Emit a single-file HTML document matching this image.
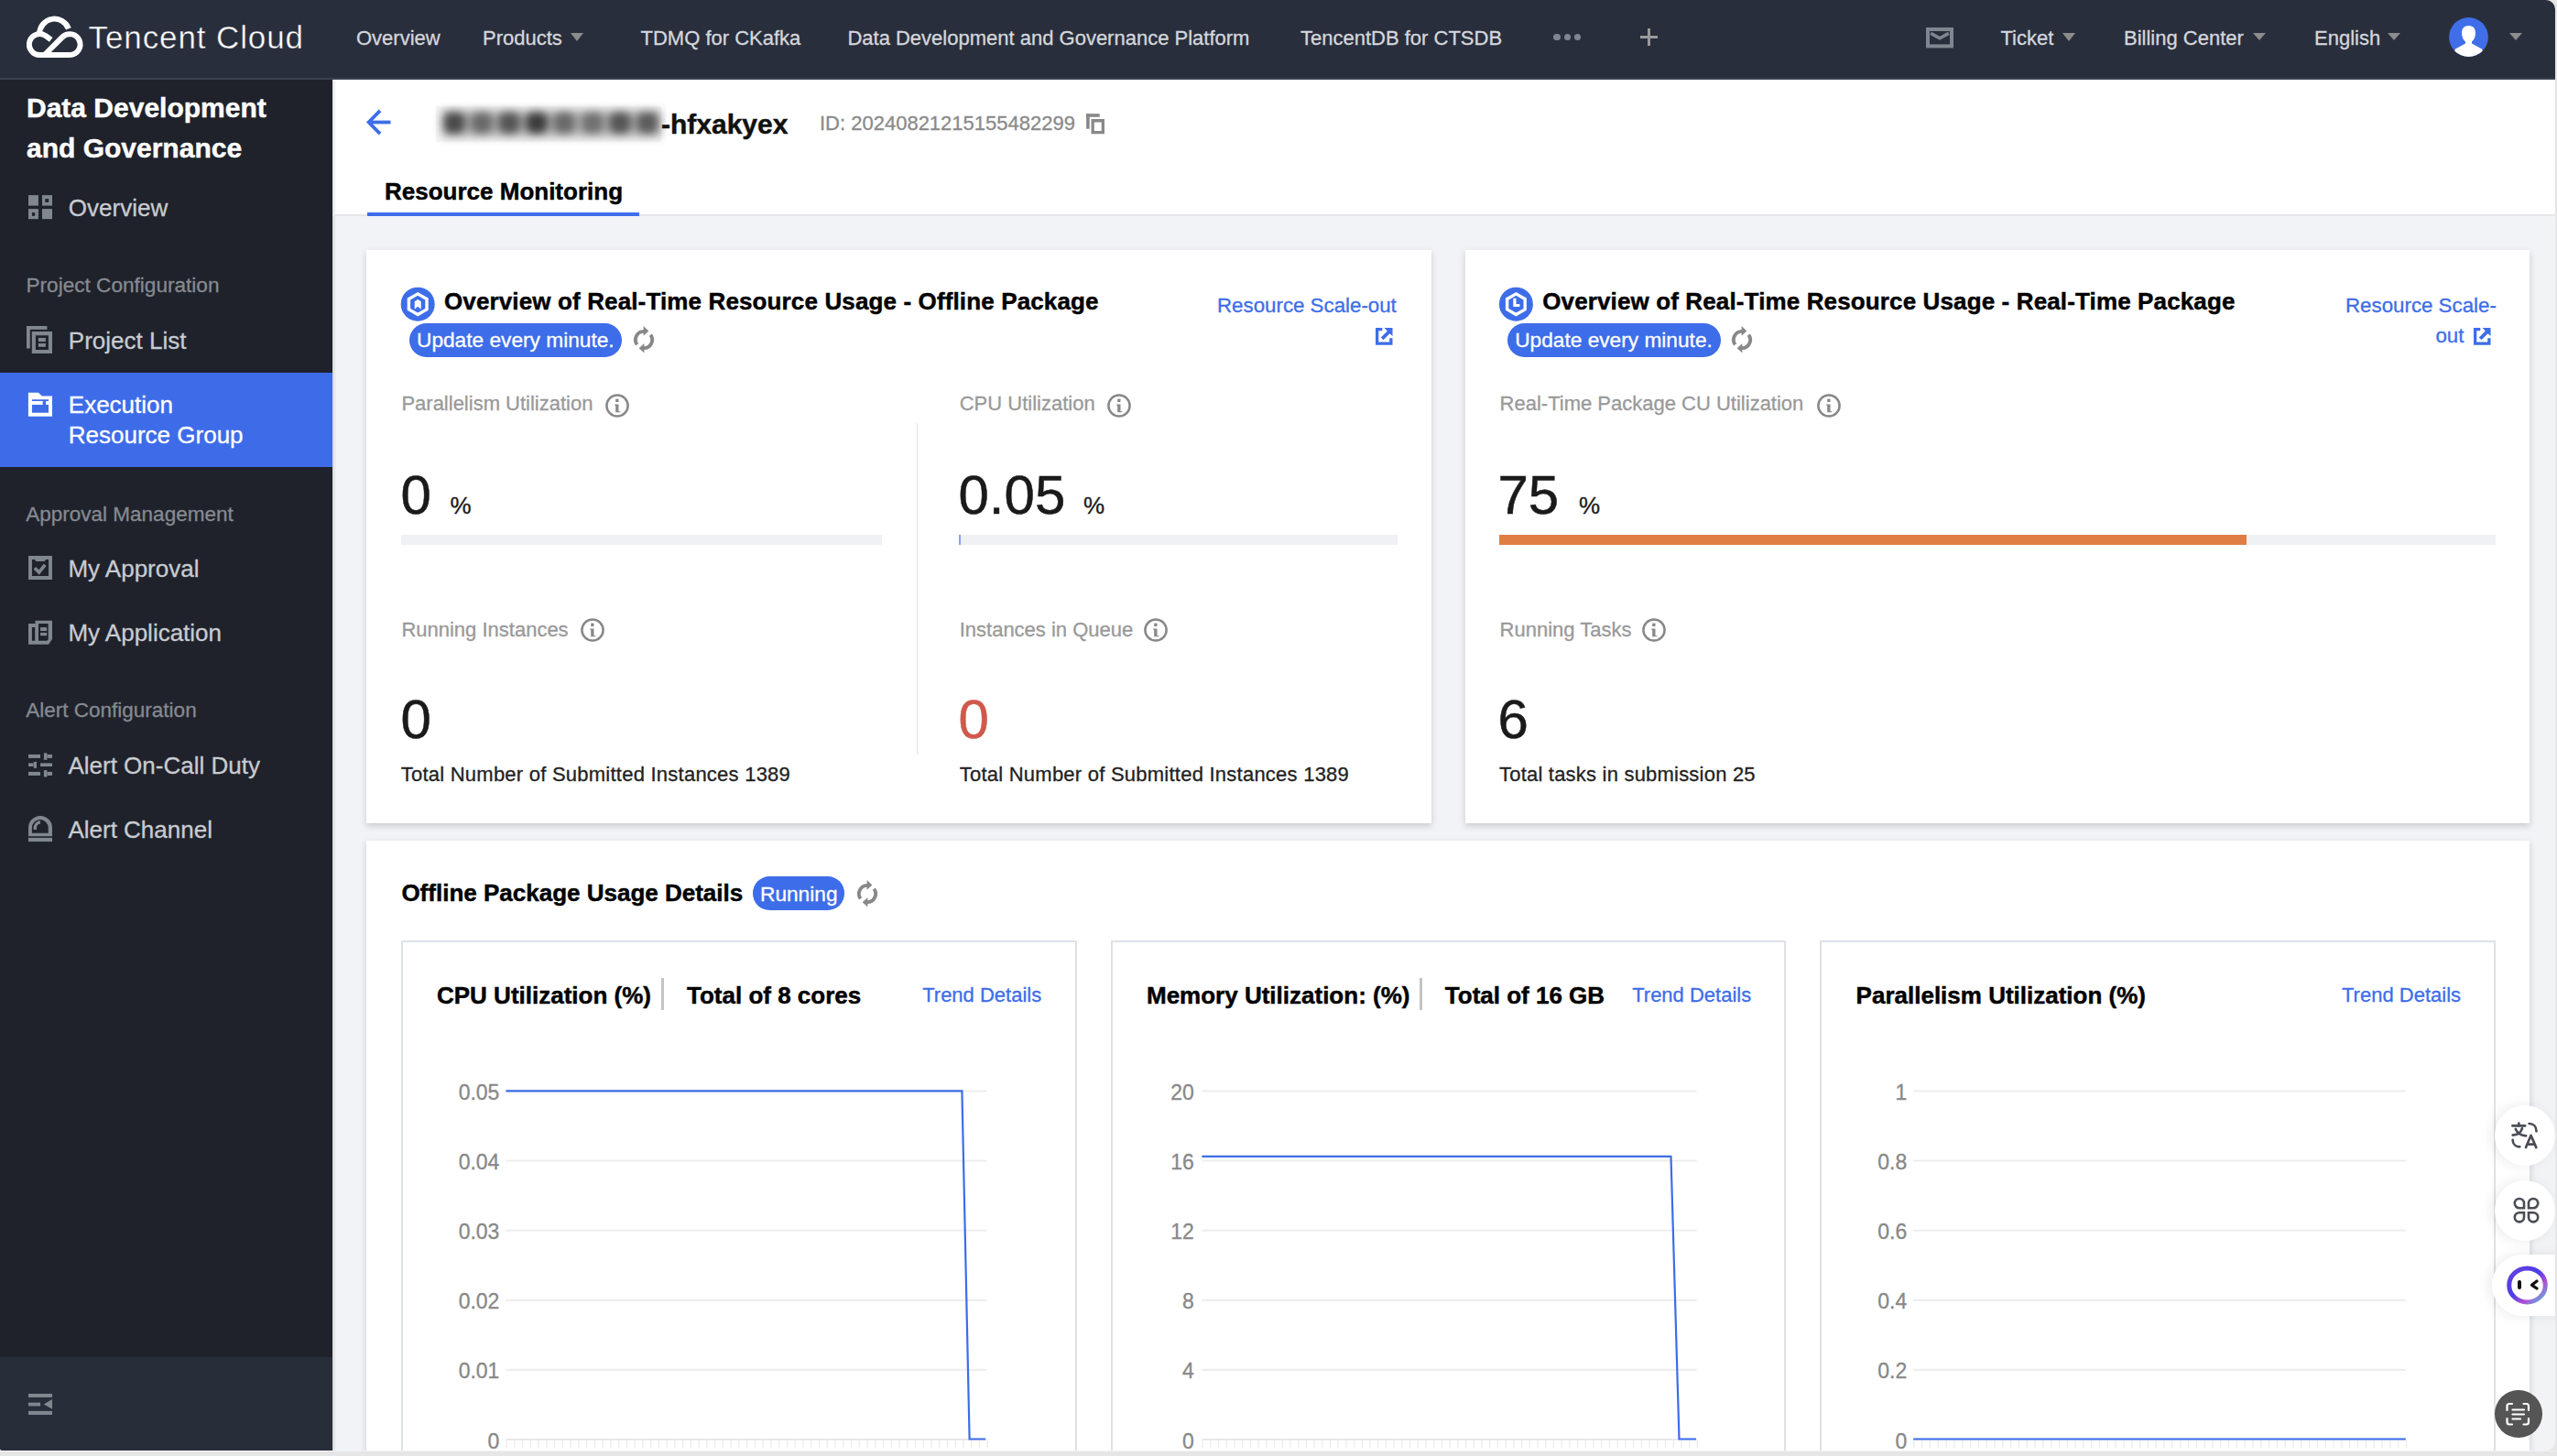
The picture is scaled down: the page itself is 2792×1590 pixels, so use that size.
<!DOCTYPE html>
<html><head><meta charset="utf-8">
<style>
html,body{margin:0;padding:0;}
body{width:2792px;height:1590px;overflow:hidden;position:relative;background:#e6e6e6;font-family:"Liberation Sans",sans-serif;}
#win{position:absolute;left:0;top:0;width:2790px;height:1584px;overflow:hidden;background:#f2f3f6;border-radius:0 10px 10px 3px;}
.t{position:absolute;white-space:nowrap;line-height:1;-webkit-text-stroke:0.3px currentColor;}
.r{position:absolute;}
svg{position:absolute;overflow:visible;}
</style></head><body>
<div id="win">
<div class="r" style="left:0.0px;top:0.0px;width:2790.0px;height:85.0px;background:#292e3c;"></div>
<div class="r" style="left:0.0px;top:85.0px;width:2790.0px;height:2.0px;background:#3a4152;"></div>
<svg style="left:20px;top:10px" width="80" height="60" viewBox="0 0 80 60"><g fill="none" stroke="#fff" stroke-width="6" stroke-linejoin="round">
<path d="M54.9 21.4 A16.4 16.4 0 0 0 23.1 27"/>
<path d="M35.7 33.4 L30.3 29.3 A11.5 11.5 0 1 0 23.4 50 L56.2 50 A11.4 11.4 0 1 0 48.1 30.5 L28.6 50"/>
</g></svg>
<div class="t" style="left:96.5px;top:23.4px;font-size:35px;color:#fff;letter-spacing:0.9px;-webkit-text-stroke:0.45px #292e3c;">Tencent Cloud</div>
<div class="t" style="left:389.0px;top:30.7px;font-size:22px;color:#d4d7dc;">Overview</div>
<div class="t" style="left:527.0px;top:30.7px;font-size:22px;color:#d4d7dc;">Products</div>
<div class="r" style="left:623.0px;top:35.9px;width:0;height:0;border-left:7.5px solid transparent;border-right:7.5px solid transparent;border-top:9.3px solid #8c8c8c;"></div>
<div class="t" style="left:699.5px;top:30.7px;font-size:22px;color:#d4d7dc;">TDMQ for CKafka</div>
<div class="t" style="left:925.4px;top:30.7px;font-size:22px;color:#d4d7dc;">Data Development and Governance Platform</div>
<div class="t" style="left:1420.0px;top:30.7px;font-size:22px;color:#d4d7dc;">TencentDB for CTSDB</div>
<div class="r" style="left:1696.4px;top:36.8px;width:7.6px;height:7.6px;border-radius:50%;background:#7f8690"></div>
<div class="r" style="left:1707.6px;top:36.8px;width:7.6px;height:7.6px;border-radius:50%;background:#7f8690"></div>
<div class="r" style="left:1718.7px;top:36.8px;width:7.6px;height:7.6px;border-radius:50%;background:#7f8690"></div>
<div class="r" style="left:1790.9px;top:39.0px;width:19.1px;height:3.3px;background:#9a9a9a;"></div>
<div class="r" style="left:1798.8px;top:31.2px;width:3.3px;height:18.8px;background:#9a9a9a;"></div>
<svg style="left:2103px;top:29.5px" width="30" height="23" viewBox="0 0 30 23"><rect x="2" y="2" width="26" height="18.4" fill="none" stroke="#7f8690" stroke-width="4"/><path d="M5.2 6.4 L15 11.7 L24.8 6.4" fill="none" stroke="#7f8690" stroke-width="3.5"/></svg>
<div class="t" style="left:2184.5px;top:30.7px;font-size:22px;color:#d4d7dc;">Ticket</div>
<div class="r" style="left:2252.0px;top:35.9px;width:0;height:0;border-left:7.5px solid transparent;border-right:7.5px solid transparent;border-top:9.3px solid #8c8c8c;"></div>
<div class="t" style="left:2319.0px;top:30.7px;font-size:22px;color:#d4d7dc;">Billing Center</div>
<div class="r" style="left:2460.0px;top:36.2px;width:0;height:0;border-left:7.0px solid transparent;border-right:7.0px solid transparent;border-top:8.7px solid #8c8c8c;"></div>
<div class="t" style="left:2527.0px;top:30.7px;font-size:22px;color:#d4d7dc;">English</div>
<div class="r" style="left:2607.0px;top:36.2px;width:0;height:0;border-left:7.0px solid transparent;border-right:7.0px solid transparent;border-top:8.7px solid #8c8c8c;"></div>
<svg style="left:2674px;top:19.2px" width="43" height="43" viewBox="0 0 43 43"><defs><clipPath id="avc"><circle cx="21.5" cy="21.5" r="21.4"/></clipPath></defs>
<circle cx="21.5" cy="21.5" r="21.4" fill="#3f6ee8"/>
<g clip-path="url(#avc)" fill="#fff"><path d="M21.5 8.9 C26.5 8.9 29 12.5 29 16.5 C29 21 27.5 24.5 25 26.5 L25 28.5 L36 34.5 L40 46 L3 46 L7 34.5 L18 28.5 L18 26.5 C15.5 24.5 14 21 14 16.5 C14 12.5 16.5 8.9 21.5 8.9 Z"/></g></svg>
<div class="r" style="left:2740.0px;top:36.2px;width:0;height:0;border-left:7.0px solid transparent;border-right:7.0px solid transparent;border-top:8.7px solid #8c8c8c;"></div>
<div class="r" style="left:0.0px;top:87.0px;width:363.0px;height:1497.0px;background:#1f222b;"></div>
<div class="r" style="left:0.0px;top:1481.5px;width:363.0px;height:102.5px;background:#282d3a;"></div>
<div class="t" style="left:29.0px;top:102.6px;font-size:30px;color:#fff;font-weight:bold;-webkit-text-stroke:0.45px currentColor;">Data Development</div>
<div class="t" style="left:29.0px;top:146.6px;font-size:30px;color:#fff;font-weight:bold;-webkit-text-stroke:0.45px currentColor;">and Governance</div>
<svg style="left:0;top:0" width="1" height="1"><g fill="#80878f">
<rect x="31" y="213.1" width="10.9" height="11.5"/><rect x="46" y="213.1" width="11" height="11.5"/>
<rect x="31" y="228.1" width="10.9" height="11.1"/><rect x="46" y="228.1" width="11" height="11.1"/>
<rect x="49.3" y="217.1" width="3.9" height="3.8" fill="#1f222b"/><rect x="34.9" y="232.1" width="3.3" height="3.7" fill="#1f222b"/>
</g></svg>
<div class="t" style="left:74.8px;top:214.0px;font-size:26px;color:#c8cbd0;">Overview</div>
<div class="t" style="left:28.5px;top:301.3px;font-size:22.6px;color:#868a91;">Project Configuration</div>
<svg style="left:0;top:0" width="1" height="1"><g fill="#80878f">
<rect x="29" y="356" width="22.4" height="3.9"/><rect x="29" y="356" width="3.8" height="24.5"/>
<path fill-rule="evenodd" d="M34.8 362.1 H57 V385.9 H34.8 Z M38.9 366.2 V381.9 H52.9 V366.2 Z"/>
<rect x="41.9" y="369" width="8" height="4.1"/><rect x="41.9" y="375" width="8" height="3.8"/>
</g></svg>
<div class="t" style="left:74.8px;top:358.5px;font-size:26px;color:#c8cbd0;">Project List</div>
<div class="r" style="left:0.0px;top:406.5px;width:363.0px;height:103.5px;background:#3e6ce9;"></div>
<svg style="left:0;top:0" width="1" height="1"><g fill="#fff">
<path fill-rule="evenodd" d="M30.9 428.7 H41.9 L45.9 432.4 H57 V454.8 H30.9 Z M34.9 436.3 V437.9 H46.7 V442 H34.9 V450.7 H53 V442 H50.1 V437.9 H53 V436.3 Z"/>
</g></svg>
<div class="t" style="left:74.8px;top:428.8px;font-size:26px;color:#fff;">Execution</div>
<div class="t" style="left:74.8px;top:462.3px;font-size:26px;color:#fff;">Resource Group</div>
<div class="t" style="left:28.3px;top:550.6px;font-size:22.5px;color:#868a91;">Approval Management</div>
<svg style="left:0;top:0" width="1" height="1"><g fill="none" stroke="#80878f">
<path stroke-width="3.9" d="M33 609 H55 V631 H33 Z"/>
<path stroke="none" fill="#80878f" d="M37.5 610.5 H50.5 L48.6 612.9 H39.4 Z"/>
<path stroke-width="3.6" d="M37.9 620.3 L42.6 625 L49.2 616.8"/>
</g></svg>
<div class="t" style="left:74.4px;top:607.6px;font-size:26px;color:#c8cbd0;">My Approval</div>
<svg style="left:0;top:0" width="1" height="1"><g fill="#80878f">
<path fill-rule="evenodd" d="M31 681 H38.5 V677.8 H57 V698 L53 703.7 H31 Z M34.9 685.1 V699.7 H38.2 V685.1 Z M42 681 V699.7 H50.5 C52 699.7 52.7 699 52.7 697.5 V681 Z"/>
<rect x="44.1" y="685.1" width="7" height="3.9"/><rect x="44.1" y="690.9" width="7" height="3.3"/>
</g></svg>
<div class="t" style="left:74.4px;top:678.3px;font-size:26px;color:#c8cbd0;">My Application</div>
<div class="t" style="left:28.3px;top:765.0px;font-size:22.5px;color:#868a91;">Alert Configuration</div>
<svg style="left:0;top:0" width="1" height="1"><g fill="#80878f">
<rect x="31" y="823.9" width="13" height="4"/><rect x="47.9" y="822.3" width="3.5" height="7.5"/><rect x="51.4" y="823.9" width="5.6" height="4"/>
<rect x="31" y="833.4" width="5.5" height="3.6"/><rect x="36.7" y="831.9" width="3.3" height="6.9"/><rect x="44.1" y="833.4" width="12.9" height="3.6"/>
<rect x="31" y="842.9" width="13" height="4"/><rect x="47.9" y="841.1" width="3.5" height="7.3"/><rect x="51.4" y="842.9" width="5.6" height="4"/>
</g></svg>
<div class="t" style="left:74.4px;top:822.5px;font-size:26px;color:#c8cbd0;">Alert On-Call Duty</div>
<svg style="left:0;top:0" width="1" height="1"><g fill="#80878f">
<path fill-rule="evenodd" d="M31 913.3 V904 A13 13 0 0 1 57 904 V913.3 Z M34.9 909.7 H52.7 V904 A8.9 8.9 0 0 0 34.9 904 Z"/>
<rect x="31" y="914.9" width="26" height="4.2"/>
</g>
<path d="M38.3 905.9 V904.5 A6.5 6.5 0 0 1 44 897.8" fill="none" stroke="#80878f" stroke-width="3.4"/>
</svg>
<div class="t" style="left:74.4px;top:893.0px;font-size:26px;color:#c8cbd0;">Alert Channel</div>
<svg style="left:0;top:0" width="1" height="1"><g fill="#80878f">
<rect x="31" y="1522" width="26" height="4"/><rect x="31" y="1531.7" width="13.1" height="3.8"/>
<path d="M57 1528 V1538.8 L47.8 1533.4 Z"/><rect x="31" y="1540.9" width="26" height="4.1"/>
</g></svg>
<div class="r" style="left:363.0px;top:87.0px;width:2427.0px;height:147.0px;background:#fff;"></div>
<div class="r" style="left:363.0px;top:87.0px;width:4.0px;height:1497.0px;background:linear-gradient(to right,rgba(0,0,0,0.12),rgba(0,0,0,0));"></div>
<div class="r" style="left:363.0px;top:234.0px;width:2427.0px;height:1.8px;background:#e5e7eb;"></div>
<svg style="left:0;top:0" width="1" height="1"><g fill="none" stroke="#3d6de8" stroke-width="3.8" stroke-linecap="butt" stroke-linejoin="miter">
<path d="M415 120.8 L402.6 133.5 L415 146.2"/><path d="M403 133.5 H426.5"/></g></svg>
<div class="r" style="left:476px;top:116px;width:246px;height:39px;background:#f6f6f6;"></div>
<div class="r" style="left:470px;top:110px;width:258px;height:51px;overflow:hidden"><div class="r" style="left:0;top:0;width:258px;height:51px;filter:blur(5px);"><div class="r" style="left:12px;top:10px;width:240px;height:30px;background:#b4b4b4"></div><div class="r" style="left:13.6px;top:11.5px;width:24px;height:24px;border-radius:9px;background:#4a4a4a"></div><div class="r" style="left:43.8px;top:11.5px;width:24px;height:24px;border-radius:9px;background:#6a6a6a"></div><div class="r" style="left:74.0px;top:11.5px;width:24px;height:24px;border-radius:9px;background:#555"></div><div class="r" style="left:104.2px;top:11.5px;width:24px;height:24px;border-radius:9px;background:#3c3c3c"></div><div class="r" style="left:134.4px;top:11.5px;width:24px;height:24px;border-radius:9px;background:#6a6a6a"></div><div class="r" style="left:164.6px;top:11.5px;width:24px;height:24px;border-radius:9px;background:#707070"></div><div class="r" style="left:194.8px;top:11.5px;width:24px;height:24px;border-radius:9px;background:#555"></div><div class="r" style="left:225.0px;top:11.5px;width:24px;height:24px;border-radius:9px;background:#5c5c5c"></div></div></div>
<div class="t" style="left:722.0px;top:120.6px;font-size:30px;color:#111;font-weight:bold;-webkit-text-stroke:0.45px currentColor;">-hfxakyex</div>
<div class="t" style="left:895.0px;top:123.7px;font-size:22px;color:#8a8a8a;">ID: 20240821215155482299</div>
<svg style="left:0;top:0" width="1" height="1"><g fill="#888">
<rect x="1186.1" y="124.2" width="14.6" height="3.6"/><rect x="1186.1" y="124.2" width="3.6" height="16.5"/>
<path fill-rule="evenodd" d="M1191.5 130.1 H1206 V146.3 H1191.5 Z M1194.8 133.4 V143 H1202.7 V133.4 Z"/></g></svg>
<div class="t" style="left:420.0px;top:196.0px;font-size:26px;color:#000;font-weight:bold;-webkit-text-stroke:0.45px currentColor;">Resource Monitoring</div>
<div class="r" style="left:400.5px;top:232.0px;width:297.5px;height:4.0px;background:#3d6de8;"></div>
<div class="r" style="left:400.3px;top:273.0px;width:1163.2px;height:626.3px;background:#fff;box-shadow:0 3px 7px rgba(20,25,40,0.19);"></div>
<div class="r" style="left:1599.5px;top:273.0px;width:1162.5px;height:626.3px;background:#fff;box-shadow:0 3px 7px rgba(20,25,40,0.19);"></div>
<div class="r" style="left:400.3px;top:918.0px;width:2361.7px;height:782.0px;background:#fff;box-shadow:0 3px 7px rgba(20,25,40,0.19);"></div>
<svg style="left:0;top:0" width="1" height="1"><circle cx="456.2" cy="332.2" r="18.5" fill="#3d6de8"/><polygon points="456.20,320.90 465.99,326.55 465.99,337.85 456.20,343.50 446.41,337.85 446.41,326.55" fill="none" stroke="#fff" stroke-width="3.4"/><path d="M452.7 329.2 L456.2 327.0 L459.7 329.2 L459.7 337.7 L456.2 334.7 L452.7 337.7 Z" fill="#fff"/></svg>
<div class="t" style="left:485.0px;top:316.3px;font-size:26px;color:#000;font-weight:bold;-webkit-text-stroke:0.45px currentColor;letter-spacing:0.13px;">Overview of Real-Time Resource Usage - Offline Package</div>
<div class="r" style="left:446.8px;top:352.6px;width:232.5px;height:37.4px;background:#3d6de8;border-radius:18.69999999999999px;"></div>
<div class="t" style="left:455.0px;top:359.6px;font-size:22.7px;color:#fff;">Update every minute.</div>
<svg style="left:688.2px;top:356.2px" width="30" height="30" viewBox="0 0 30 30"><g fill="#888">
<path d="M6.1 21.47 A11 11 0 0 1 15 4 L15 7.8 A7.2 7.2 0 0 0 9.18 19.23 Z"/>
<path d="M14.6 0.1 L20.3 5.5 L14.6 10.8 Z"/>
<path d="M23.9 8.4 A11 11 0 0 1 15 26 L15 22.2 A7.2 7.2 0 0 0 20.75 10.67 Z"/>
<path d="M15.4 18.9 L9.7 24.3 L15.4 29.4 Z"/>
</g></svg>
<svg style="left:0;top:0" width="1" height="1"><circle cx="1655.4" cy="332.2" r="18.5" fill="#3d6de8"/><polygon points="1655.40,320.90 1665.19,326.55 1665.19,337.85 1655.40,343.50 1645.61,337.85 1645.61,326.55" fill="none" stroke="#fff" stroke-width="3.4"/><path d="M1653.9 325.7 V333.5 H1659.4 " fill="none" stroke="#fff" stroke-width="3.2"/></svg>
<div class="t" style="left:1684.2px;top:316.3px;font-size:26px;color:#000;font-weight:bold;-webkit-text-stroke:0.45px currentColor;letter-spacing:0.13px;">Overview of Real-Time Resource Usage - Real-Time Package</div>
<div class="r" style="left:1646.0px;top:352.6px;width:232.5px;height:37.4px;background:#3d6de8;border-radius:18.69999999999999px;"></div>
<div class="t" style="left:1654.2px;top:359.6px;font-size:22.7px;color:#fff;">Update every minute.</div>
<svg style="left:1887.4px;top:356.2px" width="30" height="30" viewBox="0 0 30 30"><g fill="#888">
<path d="M6.1 21.47 A11 11 0 0 1 15 4 L15 7.8 A7.2 7.2 0 0 0 9.18 19.23 Z"/>
<path d="M14.6 0.1 L20.3 5.5 L14.6 10.8 Z"/>
<path d="M23.9 8.4 A11 11 0 0 1 15 26 L15 22.2 A7.2 7.2 0 0 0 20.75 10.67 Z"/>
<path d="M15.4 18.9 L9.7 24.3 L15.4 29.4 Z"/>
</g></svg>
<div class="t" style="left:1329.0px;top:322.9px;font-size:22.3px;color:#3d6de8;">Resource Scale-out</div>
<svg style="left:1501.5px;top:358px" width="19" height="19" viewBox="0 0 19 19"><g fill="#3d6de8">
<path d="M0 0 H7.3 V3.3 H3.3 V15.5 H15.2 V11.2 H18.5 V18.8 H0 Z"/>
<path d="M9.6 0 H18.5 V9.1 L15.5 6.2 L8.5 13.2 L5.8 10.5 L12.8 3.5 Z"/></g></svg>
<div class="t" style="left:2561.0px;top:322.9px;font-size:22.3px;color:#3d6de8;">Resource Scale-</div>
<div class="t" style="left:2659.4px;top:356.1px;font-size:22.3px;color:#3d6de8;">out</div>
<svg style="left:2701.3px;top:358.4px" width="19" height="19" viewBox="0 0 19 19"><g fill="#3d6de8">
<path d="M0 0 H7.3 V3.3 H3.3 V15.5 H15.2 V11.2 H18.5 V18.8 H0 Z"/>
<path d="M9.6 0 H18.5 V9.1 L15.5 6.2 L8.5 13.2 L5.8 10.5 L12.8 3.5 Z"/></g></svg>
<div class="t" style="left:438.4px;top:430.4px;font-size:22px;color:#999;">Parallelism Utilization</div>
<svg style="left:660.5px;top:429.8px" width="26" height="26" viewBox="0 0 26 26"><circle cx="13" cy="13" r="11.6" fill="none" stroke="#888" stroke-width="2.5"/>
<g fill="#888"><rect x="11.2" y="5.6" width="3.3" height="3.4"/><path d="M10.2 11.5 H14.5 V19.2 H16.9 L16 20.2 H11.2 V12.8 H10.2 Z"/></g></svg>
<div class="t" style="left:437.5px;top:510.7px;font-size:60px;color:#1a1a1a;-webkit-text-stroke:0.5px #1a1a1a;">0</div>
<div class="t" style="left:491.4px;top:538.5px;font-size:26px;color:#1a1a1a;">%</div>
<div class="r" style="left:437.7px;top:584.0px;width:525.6px;height:10.6px;background:#eff1f5;"></div>
<div class="r" style="left:1000.5px;top:462.0px;width:1.5px;height:362.0px;background:#e5e5e5;"></div>
<div class="t" style="left:1047.7px;top:430.4px;font-size:22px;color:#999;">CPU Utilization</div>
<svg style="left:1209px;top:429.8px" width="26" height="26" viewBox="0 0 26 26"><circle cx="13" cy="13" r="11.6" fill="none" stroke="#888" stroke-width="2.5"/>
<g fill="#888"><rect x="11.2" y="5.6" width="3.3" height="3.4"/><path d="M10.2 11.5 H14.5 V19.2 H16.9 L16 20.2 H11.2 V12.8 H10.2 Z"/></g></svg>
<div class="t" style="left:1046.5px;top:510.7px;font-size:60px;color:#1a1a1a;-webkit-text-stroke:0.5px #1a1a1a;">0.05</div>
<div class="t" style="left:1183.0px;top:538.5px;font-size:26px;color:#1a1a1a;">%</div>
<div class="r" style="left:1047.0px;top:584.0px;width:479.0px;height:10.6px;background:#eff1f5;"></div>
<div class="r" style="left:1047.0px;top:584.0px;width:2.0px;height:10.6px;background:#86a2f0;"></div>
<div class="t" style="left:438.4px;top:676.8px;font-size:22px;color:#999;">Running Instances</div>
<svg style="left:633.5px;top:674.9px" width="26" height="26" viewBox="0 0 26 26"><circle cx="13" cy="13" r="11.6" fill="none" stroke="#888" stroke-width="2.5"/>
<g fill="#888"><rect x="11.2" y="5.6" width="3.3" height="3.4"/><path d="M10.2 11.5 H14.5 V19.2 H16.9 L16 20.2 H11.2 V12.8 H10.2 Z"/></g></svg>
<div class="t" style="left:437.5px;top:755.7px;font-size:60px;color:#1a1a1a;-webkit-text-stroke:0.5px #1a1a1a;">0</div>
<div class="t" style="left:437.7px;top:835.2px;font-size:22px;color:#222;letter-spacing:0.24px;">Total Number of Submitted Instances 1389</div>
<div class="t" style="left:1047.7px;top:676.8px;font-size:22px;color:#999;">Instances in Queue</div>
<svg style="left:1248.8px;top:674.9px" width="26" height="26" viewBox="0 0 26 26"><circle cx="13" cy="13" r="11.6" fill="none" stroke="#888" stroke-width="2.5"/>
<g fill="#888"><rect x="11.2" y="5.6" width="3.3" height="3.4"/><path d="M10.2 11.5 H14.5 V19.2 H16.9 L16 20.2 H11.2 V12.8 H10.2 Z"/></g></svg>
<div class="t" style="left:1046.5px;top:755.7px;font-size:60px;color:#d0594c;-webkit-text-stroke:0.5px #d0594c;">0</div>
<div class="t" style="left:1047.7px;top:835.2px;font-size:22px;color:#222;letter-spacing:0.24px;">Total Number of Submitted Instances 1389</div>
<div class="t" style="left:1637.6px;top:430.4px;font-size:22px;color:#999;">Real-Time Package CU Utilization</div>
<svg style="left:1984px;top:429.8px" width="26" height="26" viewBox="0 0 26 26"><circle cx="13" cy="13" r="11.6" fill="none" stroke="#888" stroke-width="2.5"/>
<g fill="#888"><rect x="11.2" y="5.6" width="3.3" height="3.4"/><path d="M10.2 11.5 H14.5 V19.2 H16.9 L16 20.2 H11.2 V12.8 H10.2 Z"/></g></svg>
<div class="t" style="left:1635.5px;top:510.7px;font-size:60px;color:#1a1a1a;-webkit-text-stroke:0.5px #1a1a1a;">75</div>
<div class="t" style="left:1724.0px;top:538.5px;font-size:26px;color:#1a1a1a;">%</div>
<div class="r" style="left:1637.0px;top:584.0px;width:1088.4px;height:10.6px;background:#eff1f5;"></div>
<div class="r" style="left:1637.0px;top:584.0px;width:816.2px;height:10.6px;background:#e07d45;"></div>
<div class="t" style="left:1637.6px;top:676.8px;font-size:22px;color:#999;">Running Tasks</div>
<svg style="left:1792.5px;top:674.9px" width="26" height="26" viewBox="0 0 26 26"><circle cx="13" cy="13" r="11.6" fill="none" stroke="#888" stroke-width="2.5"/>
<g fill="#888"><rect x="11.2" y="5.6" width="3.3" height="3.4"/><path d="M10.2 11.5 H14.5 V19.2 H16.9 L16 20.2 H11.2 V12.8 H10.2 Z"/></g></svg>
<div class="t" style="left:1635.5px;top:755.7px;font-size:60px;color:#1a1a1a;-webkit-text-stroke:0.5px #1a1a1a;">6</div>
<div class="t" style="left:1637.0px;top:835.2px;font-size:22px;color:#222;letter-spacing:0.21px;">Total tasks in submission 25</div>
<div class="t" style="left:438.4px;top:962.0px;font-size:26px;color:#000;font-weight:bold;-webkit-text-stroke:0.45px currentColor;">Offline Package Usage Details</div>
<div class="r" style="left:821.5px;top:957.3px;width:100.7px;height:36.5px;background:#3d6de8;border-radius:18.25px;"></div>
<div class="t" style="left:830.0px;top:965.0px;font-size:22.7px;color:#fff;">Running</div>
<svg style="left:931.6px;top:960.8px" width="30" height="30" viewBox="0 0 30 30"><g fill="#888">
<path d="M6.1 21.47 A11 11 0 0 1 15 4 L15 7.8 A7.2 7.2 0 0 0 9.18 19.23 Z"/>
<path d="M14.6 0.1 L20.3 5.5 L14.6 10.8 Z"/>
<path d="M23.9 8.4 A11 11 0 0 1 15 26 L15 22.2 A7.2 7.2 0 0 0 20.75 10.67 Z"/>
<path d="M15.4 18.9 L9.7 24.3 L15.4 29.4 Z"/>
</g></svg>
<div class="r" style="left:437.5px;top:1027px;width:734.5px;height:700px;border:2px solid #dde1e8;"></div>
<div class="r" style="left:1212.7px;top:1027px;width:733.3px;height:700px;border:2px solid #dde1e8;"></div>
<div class="r" style="left:1987.2px;top:1027px;width:734.1000000000001px;height:700px;border:2px solid #dde1e8;"></div>
<div class="t" style="left:477.0px;top:1073.7px;font-size:26px;color:#000;font-weight:bold;-webkit-text-stroke:0.45px currentColor;">CPU Utilization (%)</div>
<div class="r" style="left:722.2px;top:1068.0px;width:3.0px;height:35.0px;background:#c4c4c4;"></div>
<div class="t" style="left:750.0px;top:1073.7px;font-size:26px;color:#000;font-weight:bold;-webkit-text-stroke:0.45px currentColor;">Total of 8 cores</div>
<div class="t" style="left:1007.2px;top:1075.7px;font-size:22px;color:#3d6de8;">Trend Details</div>
<div class="t" style="left:1252.0px;top:1073.7px;font-size:26px;color:#000;font-weight:bold;-webkit-text-stroke:0.45px currentColor;">Memory Utilization: (%)</div>
<div class="r" style="left:1550.2px;top:1068.0px;width:3.0px;height:35.0px;background:#c4c4c4;"></div>
<div class="t" style="left:1577.8px;top:1073.7px;font-size:26px;color:#000;font-weight:bold;-webkit-text-stroke:0.45px currentColor;">Total of 16 GB</div>
<div class="t" style="left:1782.2px;top:1075.7px;font-size:22px;color:#3d6de8;">Trend Details</div>
<div class="t" style="left:2026.6px;top:1073.7px;font-size:26px;color:#000;font-weight:bold;-webkit-text-stroke:0.45px currentColor;">Parallelism Utilization (%)</div>
<div class="t" style="left:2557.0px;top:1075.7px;font-size:22px;color:#3d6de8;">Trend Details</div>
<svg style="left:0;top:0" width="1" height="1"><rect x="552.4" y="1190.5" width="525.1999999999999" height="2" fill="#ededed"/><rect x="552.4" y="1266.6" width="525.1999999999999" height="2" fill="#ededed"/><rect x="552.4" y="1342.7" width="525.1999999999999" height="2" fill="#ededed"/><rect x="552.4" y="1418.8" width="525.1999999999999" height="2" fill="#ededed"/><rect x="552.4" y="1494.9" width="525.1999999999999" height="2" fill="#ededed"/><rect x="552.4" y="1571" width="525.1999999999999" height="2" fill="#e8e8e8"/><rect x="552.4" y="1572" width="1.3" height="9" fill="#ececec"/><rect x="561.2" y="1572" width="1.3" height="9" fill="#ececec"/><rect x="569.9" y="1572" width="1.3" height="9" fill="#ececec"/><rect x="578.7" y="1572" width="1.3" height="9" fill="#ececec"/><rect x="587.4" y="1572" width="1.3" height="9" fill="#ececec"/><rect x="596.2" y="1572" width="1.3" height="9" fill="#ececec"/><rect x="604.9" y="1572" width="1.3" height="9" fill="#ececec"/><rect x="613.7" y="1572" width="1.3" height="9" fill="#ececec"/><rect x="622.4" y="1572" width="1.3" height="9" fill="#ececec"/><rect x="631.2" y="1572" width="1.3" height="9" fill="#ececec"/><rect x="639.9" y="1572" width="1.3" height="9" fill="#ececec"/><rect x="648.7" y="1572" width="1.3" height="9" fill="#ececec"/><rect x="657.4" y="1572" width="1.3" height="9" fill="#ececec"/><rect x="666.2" y="1572" width="1.3" height="9" fill="#ececec"/><rect x="674.9" y="1572" width="1.3" height="9" fill="#ececec"/><rect x="683.7" y="1572" width="1.3" height="9" fill="#ececec"/><rect x="692.5" y="1572" width="1.3" height="9" fill="#ececec"/><rect x="701.2" y="1572" width="1.3" height="9" fill="#ececec"/><rect x="710.0" y="1572" width="1.3" height="9" fill="#ececec"/><rect x="718.7" y="1572" width="1.3" height="9" fill="#ececec"/><rect x="727.5" y="1572" width="1.3" height="9" fill="#ececec"/><rect x="736.2" y="1572" width="1.3" height="9" fill="#ececec"/><rect x="745.0" y="1572" width="1.3" height="9" fill="#ececec"/><rect x="753.7" y="1572" width="1.3" height="9" fill="#ececec"/><rect x="762.5" y="1572" width="1.3" height="9" fill="#ececec"/><rect x="771.2" y="1572" width="1.3" height="9" fill="#ececec"/><rect x="780.0" y="1572" width="1.3" height="9" fill="#ececec"/><rect x="788.7" y="1572" width="1.3" height="9" fill="#ececec"/><rect x="797.5" y="1572" width="1.3" height="9" fill="#ececec"/><rect x="806.2" y="1572" width="1.3" height="9" fill="#ececec"/><rect x="815.0" y="1572" width="1.3" height="9" fill="#ececec"/><rect x="823.8" y="1572" width="1.3" height="9" fill="#ececec"/><rect x="832.5" y="1572" width="1.3" height="9" fill="#ececec"/><rect x="841.3" y="1572" width="1.3" height="9" fill="#ececec"/><rect x="850.0" y="1572" width="1.3" height="9" fill="#ececec"/><rect x="858.8" y="1572" width="1.3" height="9" fill="#ececec"/><rect x="867.5" y="1572" width="1.3" height="9" fill="#ececec"/><rect x="876.3" y="1572" width="1.3" height="9" fill="#ececec"/><rect x="885.0" y="1572" width="1.3" height="9" fill="#ececec"/><rect x="893.8" y="1572" width="1.3" height="9" fill="#ececec"/><rect x="902.5" y="1572" width="1.3" height="9" fill="#ececec"/><rect x="911.3" y="1572" width="1.3" height="9" fill="#ececec"/><rect x="920.0" y="1572" width="1.3" height="9" fill="#ececec"/><rect x="928.8" y="1572" width="1.3" height="9" fill="#ececec"/><rect x="937.5" y="1572" width="1.3" height="9" fill="#ececec"/><rect x="946.3" y="1572" width="1.3" height="9" fill="#ececec"/><rect x="955.1" y="1572" width="1.3" height="9" fill="#ececec"/><rect x="963.8" y="1572" width="1.3" height="9" fill="#ececec"/><rect x="972.6" y="1572" width="1.3" height="9" fill="#ececec"/><rect x="981.3" y="1572" width="1.3" height="9" fill="#ececec"/><rect x="990.1" y="1572" width="1.3" height="9" fill="#ececec"/><rect x="998.8" y="1572" width="1.3" height="9" fill="#ececec"/><rect x="1007.6" y="1572" width="1.3" height="9" fill="#ececec"/><rect x="1016.3" y="1572" width="1.3" height="9" fill="#ececec"/><rect x="1025.1" y="1572" width="1.3" height="9" fill="#ececec"/><rect x="1033.8" y="1572" width="1.3" height="9" fill="#ececec"/><rect x="1042.6" y="1572" width="1.3" height="9" fill="#ececec"/><rect x="1051.3" y="1572" width="1.3" height="9" fill="#ececec"/><rect x="1060.1" y="1572" width="1.3" height="9" fill="#ececec"/><rect x="1068.8" y="1572" width="1.3" height="9" fill="#ececec"/><rect x="1077.6" y="1572" width="1.3" height="9" fill="#ececec"/><path d="M552.4 1191.4 H1050.4 L1058.6 1571.5 H1076" fill="none" stroke="#3d6de8" stroke-width="2.2"/></svg>
<div class="t" style="left:345.4px;width:200px;text-align:right;top:1182.0px;font-size:23px;color:#888">0.05</div>
<div class="t" style="left:345.4px;width:200px;text-align:right;top:1258.1px;font-size:23px;color:#888">0.04</div>
<div class="t" style="left:345.4px;width:200px;text-align:right;top:1334.2px;font-size:23px;color:#888">0.03</div>
<div class="t" style="left:345.4px;width:200px;text-align:right;top:1410.3px;font-size:23px;color:#888">0.02</div>
<div class="t" style="left:345.4px;width:200px;text-align:right;top:1486.4px;font-size:23px;color:#888">0.01</div>
<div class="t" style="left:345.4px;width:200px;text-align:right;top:1562.5px;font-size:23px;color:#888">0</div>
<svg style="left:0;top:0" width="1" height="1"><rect x="1312.4" y="1190.5" width="540.3" height="2" fill="#ededed"/><rect x="1312.4" y="1266.6" width="540.3" height="2" fill="#ededed"/><rect x="1312.4" y="1342.7" width="540.3" height="2" fill="#ededed"/><rect x="1312.4" y="1418.8" width="540.3" height="2" fill="#ededed"/><rect x="1312.4" y="1494.9" width="540.3" height="2" fill="#ededed"/><rect x="1312.4" y="1571" width="540.3" height="2" fill="#e8e8e8"/><rect x="1312.4" y="1572" width="1.3" height="9" fill="#ececec"/><rect x="1321.1" y="1572" width="1.3" height="9" fill="#ececec"/><rect x="1329.8" y="1572" width="1.3" height="9" fill="#ececec"/><rect x="1338.5" y="1572" width="1.3" height="9" fill="#ececec"/><rect x="1347.3" y="1572" width="1.3" height="9" fill="#ececec"/><rect x="1356.0" y="1572" width="1.3" height="9" fill="#ececec"/><rect x="1364.7" y="1572" width="1.3" height="9" fill="#ececec"/><rect x="1373.4" y="1572" width="1.3" height="9" fill="#ececec"/><rect x="1382.1" y="1572" width="1.3" height="9" fill="#ececec"/><rect x="1390.8" y="1572" width="1.3" height="9" fill="#ececec"/><rect x="1399.5" y="1572" width="1.3" height="9" fill="#ececec"/><rect x="1408.3" y="1572" width="1.3" height="9" fill="#ececec"/><rect x="1417.0" y="1572" width="1.3" height="9" fill="#ececec"/><rect x="1425.7" y="1572" width="1.3" height="9" fill="#ececec"/><rect x="1434.4" y="1572" width="1.3" height="9" fill="#ececec"/><rect x="1443.1" y="1572" width="1.3" height="9" fill="#ececec"/><rect x="1451.8" y="1572" width="1.3" height="9" fill="#ececec"/><rect x="1460.5" y="1572" width="1.3" height="9" fill="#ececec"/><rect x="1469.3" y="1572" width="1.3" height="9" fill="#ececec"/><rect x="1478.0" y="1572" width="1.3" height="9" fill="#ececec"/><rect x="1486.7" y="1572" width="1.3" height="9" fill="#ececec"/><rect x="1495.4" y="1572" width="1.3" height="9" fill="#ececec"/><rect x="1504.1" y="1572" width="1.3" height="9" fill="#ececec"/><rect x="1512.8" y="1572" width="1.3" height="9" fill="#ececec"/><rect x="1521.5" y="1572" width="1.3" height="9" fill="#ececec"/><rect x="1530.3" y="1572" width="1.3" height="9" fill="#ececec"/><rect x="1539.0" y="1572" width="1.3" height="9" fill="#ececec"/><rect x="1547.7" y="1572" width="1.3" height="9" fill="#ececec"/><rect x="1556.4" y="1572" width="1.3" height="9" fill="#ececec"/><rect x="1565.1" y="1572" width="1.3" height="9" fill="#ececec"/><rect x="1573.8" y="1572" width="1.3" height="9" fill="#ececec"/><rect x="1582.6" y="1572" width="1.3" height="9" fill="#ececec"/><rect x="1591.3" y="1572" width="1.3" height="9" fill="#ececec"/><rect x="1600.0" y="1572" width="1.3" height="9" fill="#ececec"/><rect x="1608.7" y="1572" width="1.3" height="9" fill="#ececec"/><rect x="1617.4" y="1572" width="1.3" height="9" fill="#ececec"/><rect x="1626.1" y="1572" width="1.3" height="9" fill="#ececec"/><rect x="1634.8" y="1572" width="1.3" height="9" fill="#ececec"/><rect x="1643.6" y="1572" width="1.3" height="9" fill="#ececec"/><rect x="1652.3" y="1572" width="1.3" height="9" fill="#ececec"/><rect x="1661.0" y="1572" width="1.3" height="9" fill="#ececec"/><rect x="1669.7" y="1572" width="1.3" height="9" fill="#ececec"/><rect x="1678.4" y="1572" width="1.3" height="9" fill="#ececec"/><rect x="1687.1" y="1572" width="1.3" height="9" fill="#ececec"/><rect x="1695.8" y="1572" width="1.3" height="9" fill="#ececec"/><rect x="1704.6" y="1572" width="1.3" height="9" fill="#ececec"/><rect x="1713.3" y="1572" width="1.3" height="9" fill="#ececec"/><rect x="1722.0" y="1572" width="1.3" height="9" fill="#ececec"/><rect x="1730.7" y="1572" width="1.3" height="9" fill="#ececec"/><rect x="1739.4" y="1572" width="1.3" height="9" fill="#ececec"/><rect x="1748.1" y="1572" width="1.3" height="9" fill="#ececec"/><rect x="1756.8" y="1572" width="1.3" height="9" fill="#ececec"/><rect x="1765.6" y="1572" width="1.3" height="9" fill="#ececec"/><rect x="1774.3" y="1572" width="1.3" height="9" fill="#ececec"/><rect x="1783.0" y="1572" width="1.3" height="9" fill="#ececec"/><rect x="1791.7" y="1572" width="1.3" height="9" fill="#ececec"/><rect x="1800.4" y="1572" width="1.3" height="9" fill="#ececec"/><rect x="1809.1" y="1572" width="1.3" height="9" fill="#ececec"/><rect x="1817.8" y="1572" width="1.3" height="9" fill="#ececec"/><rect x="1826.6" y="1572" width="1.3" height="9" fill="#ececec"/><rect x="1835.3" y="1572" width="1.3" height="9" fill="#ececec"/><rect x="1844.0" y="1572" width="1.3" height="9" fill="#ececec"/><rect x="1852.7" y="1572" width="1.3" height="9" fill="#ececec"/><path d="M1312.4 1262.8 H1824.5 L1833.5 1571.5 H1852" fill="none" stroke="#3d6de8" stroke-width="2.2"/></svg>
<div class="t" style="left:1103.8px;width:200px;text-align:right;top:1182.0px;font-size:23px;color:#888">20</div>
<div class="t" style="left:1103.8px;width:200px;text-align:right;top:1258.1px;font-size:23px;color:#888">16</div>
<div class="t" style="left:1103.8px;width:200px;text-align:right;top:1334.2px;font-size:23px;color:#888">12</div>
<div class="t" style="left:1103.8px;width:200px;text-align:right;top:1410.3px;font-size:23px;color:#888">8</div>
<div class="t" style="left:1103.8px;width:200px;text-align:right;top:1486.4px;font-size:23px;color:#888">4</div>
<div class="t" style="left:1103.8px;width:200px;text-align:right;top:1562.5px;font-size:23px;color:#888">0</div>
<svg style="left:0;top:0" width="1" height="1"><rect x="2089.2" y="1190.5" width="537.6000000000004" height="2" fill="#ededed"/><rect x="2089.2" y="1266.6" width="537.6000000000004" height="2" fill="#ededed"/><rect x="2089.2" y="1342.7" width="537.6000000000004" height="2" fill="#ededed"/><rect x="2089.2" y="1418.8" width="537.6000000000004" height="2" fill="#ededed"/><rect x="2089.2" y="1494.9" width="537.6000000000004" height="2" fill="#ededed"/><rect x="2089.2" y="1571" width="537.6000000000004" height="2" fill="#e8e8e8"/><rect x="2089.2" y="1572" width="1.3" height="9" fill="#ececec"/><rect x="2098.0" y="1572" width="1.3" height="9" fill="#ececec"/><rect x="2106.8" y="1572" width="1.3" height="9" fill="#ececec"/><rect x="2115.6" y="1572" width="1.3" height="9" fill="#ececec"/><rect x="2124.5" y="1572" width="1.3" height="9" fill="#ececec"/><rect x="2133.3" y="1572" width="1.3" height="9" fill="#ececec"/><rect x="2142.1" y="1572" width="1.3" height="9" fill="#ececec"/><rect x="2150.9" y="1572" width="1.3" height="9" fill="#ececec"/><rect x="2159.7" y="1572" width="1.3" height="9" fill="#ececec"/><rect x="2168.5" y="1572" width="1.3" height="9" fill="#ececec"/><rect x="2177.3" y="1572" width="1.3" height="9" fill="#ececec"/><rect x="2186.1" y="1572" width="1.3" height="9" fill="#ececec"/><rect x="2195.0" y="1572" width="1.3" height="9" fill="#ececec"/><rect x="2203.8" y="1572" width="1.3" height="9" fill="#ececec"/><rect x="2212.6" y="1572" width="1.3" height="9" fill="#ececec"/><rect x="2221.4" y="1572" width="1.3" height="9" fill="#ececec"/><rect x="2230.2" y="1572" width="1.3" height="9" fill="#ececec"/><rect x="2239.0" y="1572" width="1.3" height="9" fill="#ececec"/><rect x="2247.8" y="1572" width="1.3" height="9" fill="#ececec"/><rect x="2256.6" y="1572" width="1.3" height="9" fill="#ececec"/><rect x="2265.5" y="1572" width="1.3" height="9" fill="#ececec"/><rect x="2274.3" y="1572" width="1.3" height="9" fill="#ececec"/><rect x="2283.1" y="1572" width="1.3" height="9" fill="#ececec"/><rect x="2291.9" y="1572" width="1.3" height="9" fill="#ececec"/><rect x="2300.7" y="1572" width="1.3" height="9" fill="#ececec"/><rect x="2309.5" y="1572" width="1.3" height="9" fill="#ececec"/><rect x="2318.3" y="1572" width="1.3" height="9" fill="#ececec"/><rect x="2327.2" y="1572" width="1.3" height="9" fill="#ececec"/><rect x="2336.0" y="1572" width="1.3" height="9" fill="#ececec"/><rect x="2344.8" y="1572" width="1.3" height="9" fill="#ececec"/><rect x="2353.6" y="1572" width="1.3" height="9" fill="#ececec"/><rect x="2362.4" y="1572" width="1.3" height="9" fill="#ececec"/><rect x="2371.2" y="1572" width="1.3" height="9" fill="#ececec"/><rect x="2380.0" y="1572" width="1.3" height="9" fill="#ececec"/><rect x="2388.8" y="1572" width="1.3" height="9" fill="#ececec"/><rect x="2397.7" y="1572" width="1.3" height="9" fill="#ececec"/><rect x="2406.5" y="1572" width="1.3" height="9" fill="#ececec"/><rect x="2415.3" y="1572" width="1.3" height="9" fill="#ececec"/><rect x="2424.1" y="1572" width="1.3" height="9" fill="#ececec"/><rect x="2432.9" y="1572" width="1.3" height="9" fill="#ececec"/><rect x="2441.7" y="1572" width="1.3" height="9" fill="#ececec"/><rect x="2450.5" y="1572" width="1.3" height="9" fill="#ececec"/><rect x="2459.4" y="1572" width="1.3" height="9" fill="#ececec"/><rect x="2468.2" y="1572" width="1.3" height="9" fill="#ececec"/><rect x="2477.0" y="1572" width="1.3" height="9" fill="#ececec"/><rect x="2485.8" y="1572" width="1.3" height="9" fill="#ececec"/><rect x="2494.6" y="1572" width="1.3" height="9" fill="#ececec"/><rect x="2503.4" y="1572" width="1.3" height="9" fill="#ececec"/><rect x="2512.2" y="1572" width="1.3" height="9" fill="#ececec"/><rect x="2521.0" y="1572" width="1.3" height="9" fill="#ececec"/><rect x="2529.9" y="1572" width="1.3" height="9" fill="#ececec"/><rect x="2538.7" y="1572" width="1.3" height="9" fill="#ececec"/><rect x="2547.5" y="1572" width="1.3" height="9" fill="#ececec"/><rect x="2556.3" y="1572" width="1.3" height="9" fill="#ececec"/><rect x="2565.1" y="1572" width="1.3" height="9" fill="#ececec"/><rect x="2573.9" y="1572" width="1.3" height="9" fill="#ececec"/><rect x="2582.7" y="1572" width="1.3" height="9" fill="#ececec"/><rect x="2591.5" y="1572" width="1.3" height="9" fill="#ececec"/><rect x="2600.4" y="1572" width="1.3" height="9" fill="#ececec"/><rect x="2609.2" y="1572" width="1.3" height="9" fill="#ececec"/><rect x="2618.0" y="1572" width="1.3" height="9" fill="#ececec"/><rect x="2626.8" y="1572" width="1.3" height="9" fill="#ececec"/><path d="M2089.2 1571.5 H2626.8" fill="none" stroke="#3d6de8" stroke-width="2.2"/></svg>
<div class="t" style="left:1882.1999999999998px;width:200px;text-align:right;top:1182.0px;font-size:23px;color:#888">1</div>
<div class="t" style="left:1882.1999999999998px;width:200px;text-align:right;top:1258.1px;font-size:23px;color:#888">0.8</div>
<div class="t" style="left:1882.1999999999998px;width:200px;text-align:right;top:1334.2px;font-size:23px;color:#888">0.6</div>
<div class="t" style="left:1882.1999999999998px;width:200px;text-align:right;top:1410.3px;font-size:23px;color:#888">0.4</div>
<div class="t" style="left:1882.1999999999998px;width:200px;text-align:right;top:1486.4px;font-size:23px;color:#888">0.2</div>
<div class="t" style="left:1882.1999999999998px;width:200px;text-align:right;top:1562.5px;font-size:23px;color:#888">0</div>
<div class="r" style="left:2724.0px;top:1207.0px;width:66.0px;height:66.0px;background:#fff;border-radius:33px;box-shadow:-4px 0 14px rgba(0,0,0,0.08);"></div>
<div class="r" style="left:2724.0px;top:1288.5px;width:66.0px;height:66.0px;background:#fff;border-radius:33px;box-shadow:-4px 0 14px rgba(0,0,0,0.08);"></div>
<div class="r" style="left:2720.5px;top:1370.0px;width:79.5px;height:67.0px;background:#fff;border-radius:33.5px 0 0 33.5px;box-shadow:-4px 0 14px rgba(0,0,0,0.08);"></div>
<svg style="left:0;top:0" width="1" height="1"><g fill="none" stroke="#4a4d55" stroke-width="2.7" stroke-linecap="round">
<path d="M2743.4 1229.4 H2757.1"/><path d="M2750.3 1226.7 V1229.4"/>
<path d="M2746.8 1232.9 C2748.5 1237 2752 1240 2758.2 1240.3"/><path d="M2754 1232.2 C2752.5 1237 2749 1239.6 2743.7 1239.6"/>
<path d="M2761.6 1227 C2766 1227 2769.5 1230 2769.5 1235.3"/>
<path d="M2743.7 1244.9 C2743.7 1249 2746.5 1252.3 2751.3 1252.3"/>
<path d="M2758 1253.1 L2763.5 1239.9 L2769.3 1253.1" stroke-linejoin="round"/><path d="M2760 1249.6 H2767"/>
</g>
<g fill="none" stroke="#4a4d55" stroke-width="2.6" transform="translate(2758.5 1321.7)">
<path id="pt" d="M-2.5 -2.5 V-7.6 A5.1 5.1 0 1 0 -7.6 -2.5 Z"/>
<path d="M-2.5 -2.5 V-7.6 A5.1 5.1 0 1 0 -7.6 -2.5 Z" transform="scale(-1 1)"/>
<path d="M-2.5 -2.5 V-7.6 A5.1 5.1 0 1 0 -7.6 -2.5 Z" transform="scale(1 -1)"/>
<path d="M-2.5 -2.5 V-7.6 A5.1 5.1 0 1 0 -7.6 -2.5 Z" transform="scale(-1 -1)"/>
</g>
<defs><linearGradient id="bg1" x1="0" y1="0" x2="1" y2="1"><stop offset="0" stop-color="#6a3fe0"/><stop offset="0.45" stop-color="#4b3ee6"/><stop offset="0.7" stop-color="#b04fd8"/><stop offset="1" stop-color="#4ec3d8"/></linearGradient></defs>
<ellipse cx="2759.5" cy="1403.4" rx="19.8" ry="18.5" fill="none" stroke="url(#bg1)" stroke-width="5"/>
<rect x="2749" y="1398" width="4" height="10" rx="2" fill="#111"/>
<path d="M2770 1399 L2764.5 1403.3 L2770 1407" fill="none" stroke="#111" stroke-width="3.2" stroke-linecap="round" stroke-linejoin="round"/>
</svg>
<div class="r" style="left:2724.0px;top:1518.0px;width:51.5px;height:51.6px;background:#555;border-radius:50%;"></div>
<svg style="left:0;top:0" width="1" height="1"><g fill="none" stroke="#fff" stroke-width="2.2" stroke-linecap="round">
<path d="M2737.5 1540 V1535.5 A2.5 2.5 0 0 1 2740 1533 H2743"/>
<path d="M2755.5 1533 H2758.5 A2.5 2.5 0 0 1 2761 1535.5 V1540"/>
<path d="M2737.5 1549 V1553 A2.5 2.5 0 0 0 2740 1555.5 H2743"/>
<path d="M2755.5 1555.5 H2758.5 A2.5 2.5 0 0 0 2761 1553 V1549"/>
<path d="M2743.5 1539.5 H2756"/><path d="M2743.5 1544.5 H2756"/><path d="M2743.5 1549.5 H2752"/>
</g></svg>
</div>
<div class="r" style="left:0;top:1584px;width:2790px;height:1px;background:#f3f3f3"></div>
</body></html>
